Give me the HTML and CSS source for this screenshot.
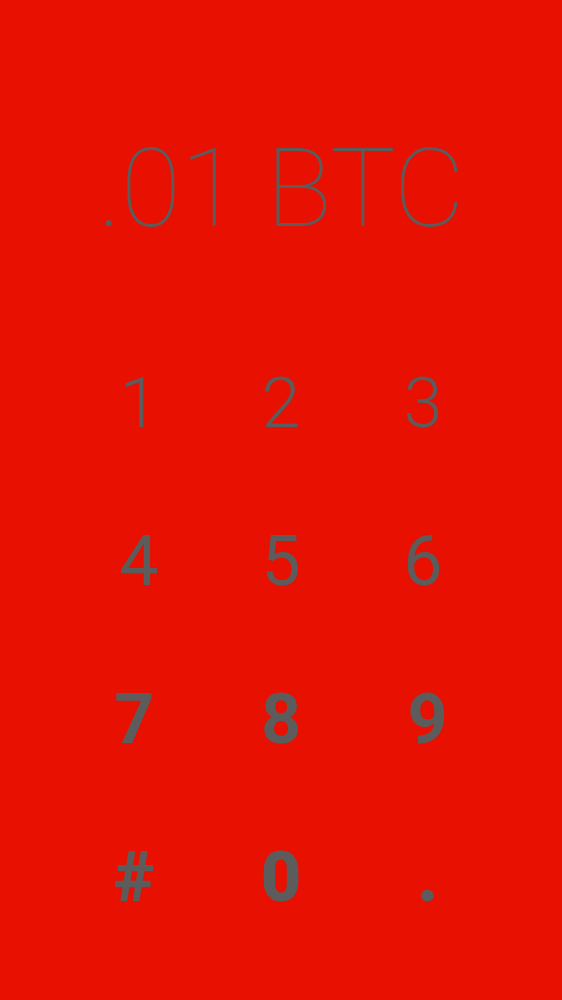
FILE: index.html
```html
<!DOCTYPE html>
<html>
<head>
<meta charset="utf-8">
<link rel="stylesheet" href="styles.css">
</head>
<body>
<div class="screen">
  <div class="amount">.01 BTC</div>
  <div class="keypad">
    <div class="row row-light">
      <div class="key">1</div>
      <div class="key">2</div>
      <div class="key">3</div>
    </div>
    <div class="row row-regular">
      <div class="key">4</div>
      <div class="key">5</div>
      <div class="key">6</div>
    </div>
    <div class="row row-bold row-wide">
      <div class="key">7</div>
      <div class="key">8</div>
      <div class="key">9</div>
    </div>
    <div class="row row-black row-wide">
      <div class="key">#</div>
      <div class="key">0</div>
      <div class="key">.</div>
    </div>
  </div>
</div>
</body>
</html>
```

FILE: styles.css
```css
html, body {
  margin: 0;
  padding: 0;
  background: #e81000;
}
.screen {
  width: 562px;
  height: 1000px;
  background: #e81000;
  color: #5c5c5c;
  font-family: Roboto, "Noto Sans", sans-serif;
  overflow: hidden;
}
.amount {
  padding-top: 134px;
  font-size: 110px;
  line-height: 110px;
  font-weight: 100;
  letter-spacing: -0.6px;
  text-align: center;
}
.keypad {
  margin-top: 80px;
  display: flex;
  flex-direction: column;
  align-items: center;
}
.row {
  width: 426px;
  height: 158px;
  display: grid;
  grid-template-columns: repeat(3, 1fr);
}
.row-wide {
  width: 440px;
}
.key {
  font-size: 70px;
  line-height: 158px;
  text-align: center;
}
.row-light { font-weight: 300; }
.row-regular { font-weight: 400; }
.row-bold { font-weight: 700; }
.row-black { font-weight: 900; }
```
